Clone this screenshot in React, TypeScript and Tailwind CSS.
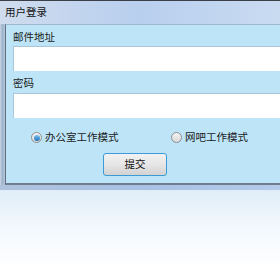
import React from 'react';

const font = { fontFamily: '"Noto Sans CJK SC", "Noto Sans", sans-serif' };

const Radio: React.FC<{ checked?: boolean; label: string }> = ({ checked = false, label }) => (
    <label className="flex items-center gap-[3px] text-[10.5px] text-[#1a1a1a] leading-none">
        <span className="w-[11px] h-[11px] rounded-full border border-[#8f8f8f] bg-gradient-to-b from-[#f4f4f4] to-[#d8d8d8] flex items-center justify-center">
            {checked && <span className="w-[6px] h-[6px] rounded-full bg-gradient-to-b from-[#7fc4f0] to-[#1b6fb8]" />}
        </span>
        {label}
    </label>
);

export default function App() {
    return (
        <div className="w-[280px] h-[270px] bg-white overflow-hidden flex flex-col" style={font}>
            {/* Title bar */}
            <div className="h-[24px] shrink-0 border-t border-[#3b4048] bg-gradient-to-r from-[#cfdcee] via-[#b8cfee] to-[#c9dbf1] flex items-center px-[5px]">
                <span className="text-[10.5px] text-[#111] leading-none">用户登录</span>
            </div>

            {/* Body */}
            <div className="flex h-[161px] shrink-0">
                <div className="w-[5px] shrink-0 bg-gradient-to-r from-[#c9d6e6] via-[#9eb2cb] to-[#b8c8dc]" />
                <div className="flex-1 bg-[#bee5f7] border-l border-b-2 border-t border-l-[#5e6f84] border-b-[#6f7d8e] border-t-[#9fb6cf] pl-[7px] pt-[7px] flex flex-col">
                    <div className="text-[10.5px] text-[#1a1a1a] leading-none h-[14px]">邮件地址</div>
                    <div className="h-[25px] bg-white border-t border-l border-[#abc6d8]" />
                    <div className="text-[10.5px] text-[#1a1a1a] leading-none mt-[7px] h-[14px]">密码</div>
                    <div className="h-[25px] bg-white border-t border-l border-[#abc6d8] mt-[1px]" />
                    <div className="flex items-center mt-[14px] pl-[18px]">
                        <div className="w-[140px]">
                            <Radio checked label="办公室工作模式" />
                        </div>
                        <Radio label="网吧工作模式" />
                    </div>
                    <div className="flex pl-[90px] mt-[10px]">
                        <button className="w-[64px] h-[23px] rounded-[3px] border border-[#3c9ad6] bg-gradient-to-b from-[#f2f2f2] via-[#e6e6e6] to-[#d2d2d2] text-[10.5px] text-[#111] leading-none">
                            提交
                        </button>
                    </div>
                </div>
            </div>

            {/* Frame bottom + shadow */}
            <div className="h-[5px] shrink-0 bg-gradient-to-r from-[#aec2dc] via-[#a8c1e4] to-[#b4cbea]" />
            <div className="flex-1 bg-gradient-to-b from-[#e0edf8] via-[#f4f9fd] to-white" />
        </div>
    );
}
